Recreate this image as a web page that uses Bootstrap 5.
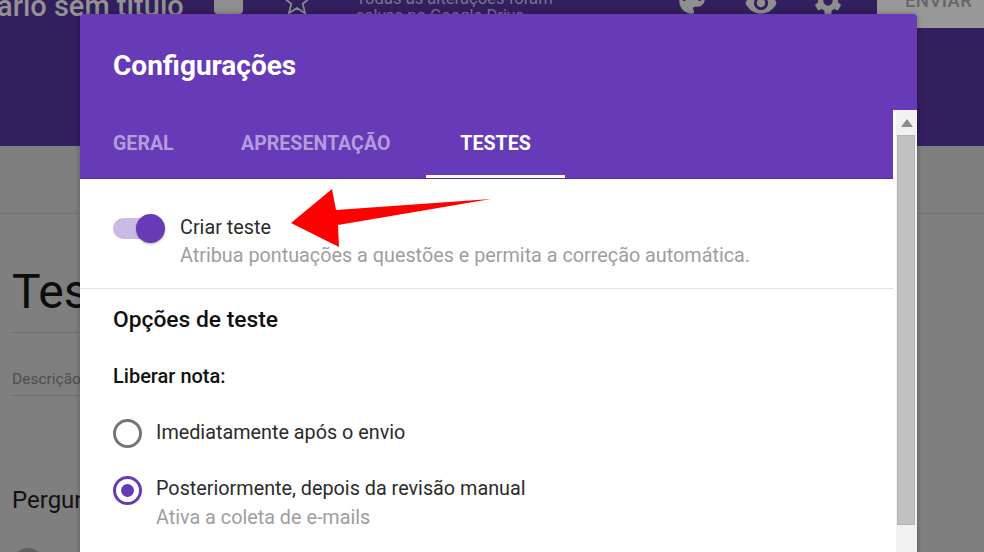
<!DOCTYPE html>
<html lang="pt-BR">
<head>
<meta charset="utf-8">
<title>Configurações</title>
<link href="https://cdn.jsdelivr.net/npm/bootstrap@5.3.0/dist/css/bootstrap.min.css" rel="stylesheet">
<style>
html,body{width:984px;height:552px;overflow:hidden;margin:0;background:#7f7f7f;font-family:Roboto,"Liberation Sans",sans-serif;}
.stage{position:relative;width:984px;height:552px;overflow:hidden;}
.pg-head{height:146px;background:#321f5d;}
.pg-bar{height:28px;align-items:flex-start;}
.pg-title{font-size:29px;line-height:30px;margin-top:-9px;margin-left:-3px;font-weight:500;width:219px;white-space:nowrap;color:#939393;}
.pg-folder{width:29px;height:14px;background:#8f8f8f;border-radius:0 0 4px 4px;flex:none;}
.pg-star{margin-left:40px;flex:none;}
.pg-note{font-size:16.6px;line-height:17px;margin-top:-10px;margin-left:44px;width:319px;color:#7f7396;flex:none;white-space:nowrap;}
.ic-a{fill:#8f8f8f;flex:none;}
.ic-p{margin-top:-16px;}
.ic-e{margin-top:-14px;margin-left:35px;}
.ic-g{margin-top:-15px;margin-left:34px;}
.pg-send{width:107px;height:28px;background:#999;color:#666;font-size:18.5px;line-height:18px;padding-left:28px;font-weight:500;margin-left:33px;letter-spacing:.4px;flex:none;}
.pg-send span{display:block;margin-top:-8px;}
.pg-main{padding-left:12px;position:relative;}
.pg-band{height:1px;background:#727272;margin:67px 0 0 -12px;}
.pg-h1{font-size:48px;line-height:56px;margin-top:50px;color:#0c0c0c;white-space:nowrap;}
.pg-rule{height:1px;background:#6e6e6e;width:70px;}
.pg-r1{margin-top:12px;}
.pg-r2{margin-top:6px;}
.pg-desc{font-size:15.5px;line-height:20px;color:#4e4e4e;margin-top:36px;white-space:nowrap;}
.pg-q{font-size:24px;line-height:30px;margin-top:89px;color:#111;white-space:nowrap;}
.pg-dot{width:30px;height:30px;border-radius:50%;background:#5f5f5f;margin:33px 0 0 1px;}
.dialog{position:absolute;left:80px;top:14px;width:837px;height:560px;background:#fff;border-radius:3px 3px 0 0;box-shadow:0 0 6px rgba(0,0,0,.28);}
.dlg-top{background:#673ab7;height:96px;padding-left:33px;border-radius:3px 3px 0 0;}
.dlg-title{font-size:28px;font-weight:700;color:#fff;line-height:32px;padding-top:36px;}
.dlg-main{width:813px;flex:none;}
.dlg-tabs{height:69px;background:#673ab7;padding-left:33px;border-bottom:1px solid #512da8;}
.dlg-tab{font-size:19.6px;font-weight:700;color:#b39ddb;line-height:22px;padding-top:23px;height:68px;}
.tab-one{width:128px;}
.tab-two{width:185px;}
.tab-three{width:139px;text-align:center;border-bottom:3px solid #fff;color:#fff;}
.sw-wrap{padding:33px 0 0 33px;height:110px;border-bottom:1px solid #e0e0e0;}
.sw-track{width:52px;height:21px;border-radius:11px;background:#c9bbe6;position:relative;margin-top:6px;flex:none;}
.sw-knob{position:absolute;right:0;top:-4px;width:29px;height:29px;border-radius:50%;background:#673ab7;box-shadow:0 1px 2px rgba(0,0,0,.3);}
.sw-label{margin-left:15px;white-space:nowrap;padding-top:4px;}
.txt-main{font-size:19.8px;line-height:28px;color:#2b2b2b;white-space:nowrap;}
.txt-sub{font-size:19.8px;line-height:28px;color:#9e9e9e;white-space:nowrap;}
.sw-label .txt-main{line-height:24px;}
.sw-label .txt-sub{margin-top:2px;}
.opt-wrap{padding:17px 0 0 33px;}
.opt-h{font-size:22.8px;font-weight:500;color:#111;line-height:28px;}
.opt-sub{font-size:20px;font-weight:500;color:#111;line-height:24px;margin-top:30px;}
.radio-one{margin-top:30px;}
.radio-two{margin-top:28px;}
.radio-two .rd{margin-top:1px;}
.radio-two .txt-sub{margin-top:1px;}
.rd{width:29px;height:29px;border-radius:50%;border:3px solid #757575;flex:none;margin-right:14px;position:relative;}
.radio-one .rd{top:1px;}
.rd-on{border-color:#673ab7;}
.rd-on::after{content:"";position:absolute;left:5px;top:5px;width:13px;height:13px;border-radius:50%;background:#673ab7;}
.sbar{width:24px;height:464px;background:#f1f1f1;border-left:3px solid #fff;position:relative;flex:none;}
.sbar-up{height:25px;}
.sbar-thumb{height:390px;background:#c1c1c1;width:18px;margin-left:1px;border:1px solid #b4b4b4;}
.arrow{position:absolute;left:280px;top:185px;}
</style>
</head>
<body>
<div class="stage">
  <div class="pg-head">
    <div class="pg-bar d-flex">
      <div class="pg-title">ario sem título</div>
      <div class="pg-folder"></div>
      <svg class="pg-star" width="29" height="16" viewBox="0 0 29 16"><path d="M14-12 17.5-2.9 27.3-2.3 19.7 3.9 22.2 13.3 14 8 5.8 13.3 8.3 3.9 .7-2.3 10.5-2.9z" fill="none" stroke="#8f8f8f" stroke-width="1.7"/></svg>
      <div class="pg-note">Todas as alterações foram<br>salvas no Google Drive</div>
      <svg class="ic-a ic-p" width="34" height="34" viewBox="0 0 24 24"><path d="M12 3c-4.97 0-9 4.03-9 9s4.03 9 9 9c.83 0 1.5-.67 1.5-1.5 0-.39-.15-.74-.39-1.01-.23-.26-.38-.61-.38-.99 0-.83.67-1.5 1.5-1.5H16c2.76 0 5-2.24 5-5 0-4.42-4.03-8-9-8zm-5.5 9c-.83 0-1.5-.67-1.5-1.5S5.67 9 6.5 9 8 9.67 8 10.5 7.33 12 6.5 12zm3-4C8.67 8 8 7.33 8 6.5S8.67 5 9.5 5s1.5.67 1.5 1.5S10.33 8 9.5 8zm5 0c-.83 0-1.5-.67-1.5-1.5S13.67 5 14.5 5s1.5.67 1.5 1.5S15.33 8 14.5 8zm3 4c-.83 0-1.5-.67-1.5-1.5S16.67 9 17.5 9s1.5.67 1.5 1.5-.67 1.5-1.5 1.5z"/></svg>
      <svg class="ic-a ic-e" width="34" height="34" viewBox="0 0 24 24"><path d="M12 4.5C7 4.5 2.73 7.61 1 12c1.73 4.39 6 7.5 11 7.5s9.27-3.11 11-7.5c-1.73-4.39-6-7.5-11-7.5zM12 17c-2.76 0-5-2.24-5-5s2.24-5 5-5 5 2.24 5 5-2.24 5-5 5zm0-8c-1.66 0-3 1.34-3 3s1.34 3 3 3 3-1.34 3-3-1.34-3-3-3z"/></svg>
      <svg class="ic-a ic-g" width="32" height="32" viewBox="0 0 24 24"><path d="M19.43 12.98c.04-.32.07-.64.07-.98s-.03-.66-.07-.98l2.11-1.65c.19-.15.24-.42.12-.64l-2-3.46c-.12-.22-.39-.3-.61-.22l-2.49 1c-.52-.4-1.08-.73-1.69-.98l-.38-2.65C14.46 2.18 14.25 2 14 2h-4c-.25 0-.46.18-.49.42l-.38 2.65c-.61.25-1.17.59-1.69.98l-2.49-1c-.23-.09-.49 0-.61.22l-2 3.46c-.13.22-.07.49.12.64l2.11 1.65c-.04.32-.07.65-.07.98s.03.66.07.98l-2.11 1.65c-.19.15-.24.42-.12.64l2 3.46c.12.22.39.3.61.22l2.49-1c.52.4 1.08.73 1.69.98l.38 2.65c.03.24.24.42.49.42h4c.25 0 .46-.18.49-.42l.38-2.65c.61-.25 1.17-.59 1.69-.98l2.49 1c.23.09.49 0 .61-.22l2-3.46c.12-.22.07-.49-.12-.64l-2.11-1.65zM12 15.5c-1.93 0-3.5-1.57-3.5-3.5s1.57-3.5 3.5-3.5 3.5 1.57 3.5 3.5-1.57 3.5-3.5 3.5z"/></svg>
      <div class="pg-send"><span>ENVIAR</span></div>
    </div>
  </div>
  <div class="pg-main">
    <div class="pg-band"></div>
    <div class="pg-h1">Teste</div>
    <div class="pg-rule pg-r1"></div>
    <div class="pg-desc">Descrição</div>
    <div class="pg-rule pg-r2"></div>
    <div class="pg-q">Pergunta</div>
    <div class="pg-dot"></div>
  </div>
  <div class="dialog">
    <div class="dlg-top">
      <div class="dlg-title">Configurações</div>
    </div>
    <div class="d-flex">
      <div class="dlg-main">
        <div class="dlg-tabs d-flex">
          <div class="dlg-tab tab-one">GERAL</div>
          <div class="dlg-tab tab-two">APRESENTAÇÃO</div>
          <div class="dlg-tab tab-three">TESTES</div>
        </div>
        <div class="sw-wrap d-flex">
          <div class="sw-track"><div class="sw-knob"></div></div>
          <div class="sw-label">
            <div class="txt-main">Criar teste</div>
            <div class="txt-sub">Atribua pontuações a questões e permita a correção automática.</div>
          </div>
        </div>
        <div class="opt-wrap">
          <div class="opt-h">Opções de teste</div>
          <div class="opt-sub">Liberar nota:</div>
          <div class="radio-one d-flex align-items-center"><span class="rd"></span><span class="txt-main">Imediatamente após o envio</span></div>
          <div class="radio-two d-flex"><span class="rd rd-on"></span><div><div class="txt-main">Posteriormente, depois da revisão manual</div><div class="txt-sub">Ativa a coleta de e-mails</div></div></div>
        </div>
      </div>
      <div class="sbar">
        <div class="sbar-up d-flex align-items-center justify-content-center"><svg width="12" height="8" viewBox="0 0 12 8"><path d="M6 0 12 8H0z" fill="#8c8c8c"/></svg></div>
        <div class="sbar-thumb"></div>
      </div>
    </div>
  </div>
  <svg class="arrow" width="220" height="70" viewBox="280 185 220 70"><path d="M291 223 332 189 336 210 491 199 338 225 339 247z" fill="#fe0000"/></svg>
</div>
</body>
</html>
